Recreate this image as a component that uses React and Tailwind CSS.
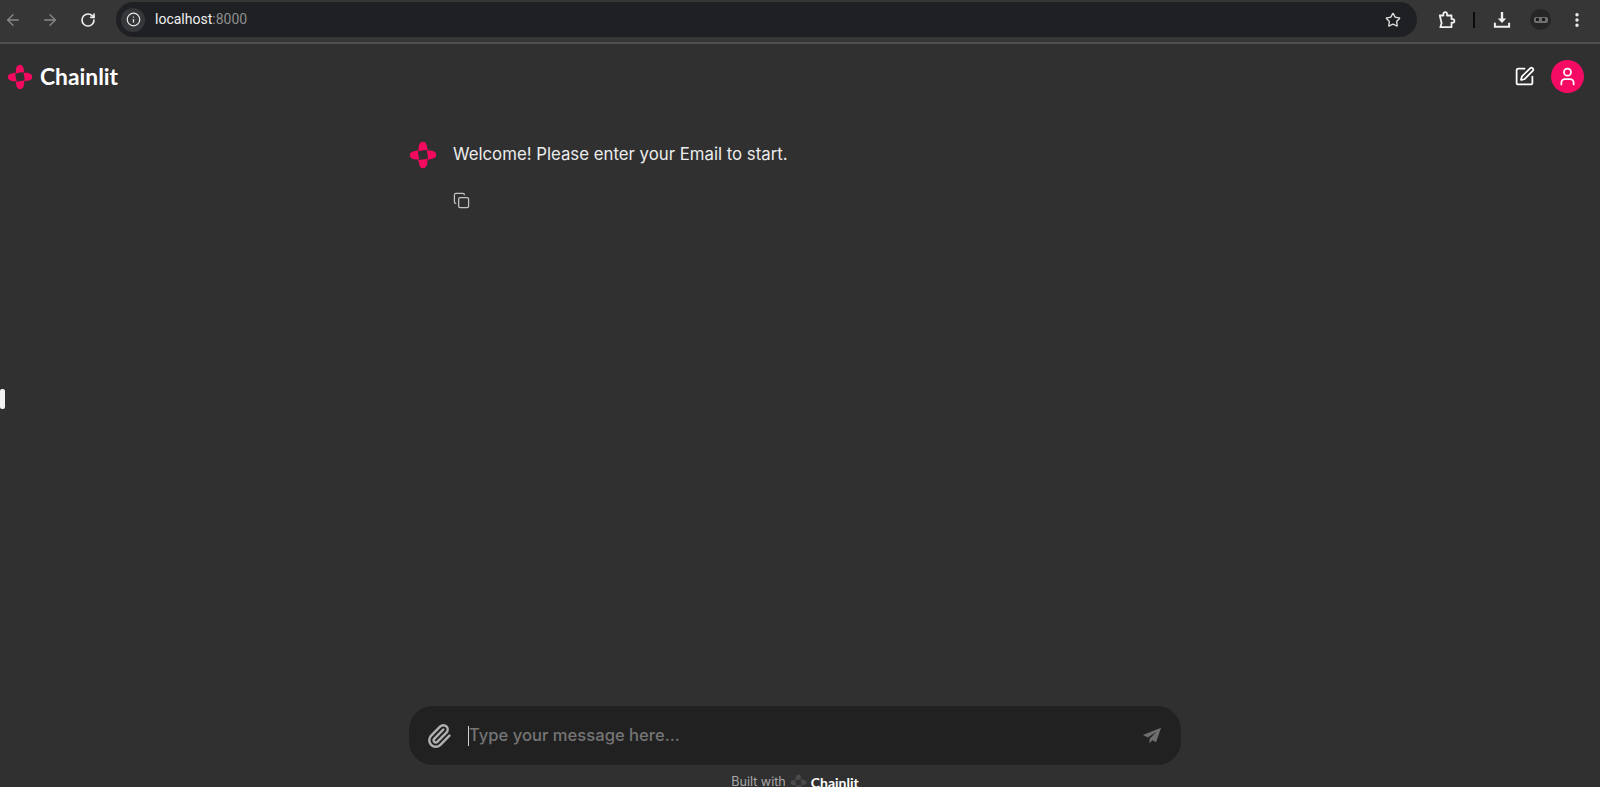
import { ArrowLeft, ArrowRight, RotateCw, Info, Star, EllipsisVertical, SquarePen, User, Copy, Paperclip } from "lucide-react";

const PETAL = "M13.6 .8C16 .6 17.6 2.6 17.8 4.8C18 6.6 18.4 7.8 19 9C16 9 12.5 9.4 9.6 10.4C9.4 8.4 9.4 6.8 9.8 5C10.2 2.8 11.4 1 13.6 .8Z";

function ChainlitMark({ className, color = "#f50a5f" }) {
  return (
    <svg viewBox="0 0 28 28" className={className} fill={color}>
      <path d={PETAL} />
      <path d={PETAL} transform="rotate(90 14 14)" />
      <path d={PETAL} transform="rotate(180 14 14)" />
      <path d={PETAL} transform="rotate(270 14 14)" />
    </svg>
  );
}

function ExtensionsIcon() {
  return (
    <svg viewBox="0 0 20 20" className="ml-[21px] h-[18px] w-[18px] shrink-0" fill="none" stroke="#f0f0f0" strokeWidth="2" strokeLinejoin="round">
      <path d="M2 5h4V3.2a2 2 0 0 1 4 0V5h5v4h1.2a2 2 0 0 1 0 4H15v5H2.6L4 13.5 2 5z" />
    </svg>
  );
}

function DownloadIcon() {
  return (
    <svg viewBox="0 0 20 20" className="ml-[18px] h-[18px] w-[18px] shrink-0" fill="#f0f0f0">
      <path d="M8.7 1h2.6v7.2h3.4L10 13.4 5.3 8.2h3.4V1z" />
      <path d="M1 13h2.2v3.4h13.6V13H19v5.6H1V13z" />
    </svg>
  );
}

function SendIcon() {
  return (
    <svg viewBox="0 0 22 20" className="h-[20px] w-[20px] shrink-0" fill="#6e6e6e">
      <path d="M21 1 1 9l5.5 2.6L16 5l-7.5 8-.5 5 3.5-3.4 4 2.2L21 1z" />
    </svg>
  );
}

function BrowserBar() {
  return (
    <div className="flex h-[42px] shrink-0 items-center bg-[#363636] pb-[3px] pl-[4px]">
      <ArrowLeft className="h-[18px] w-[18px] shrink-0 text-[#8a8a8a]" strokeWidth={1.75} />
      <ArrowRight className="ml-[19px] h-[18px] w-[18px] shrink-0 text-[#8a8a8a]" strokeWidth={1.75} />
      <RotateCw className="ml-[21px] h-[16px] w-[16px] shrink-0 text-[#f0f0f0]" strokeWidth={2.5} />
      <div className="ml-[20px] flex h-[35px] min-w-0 flex-1 items-center rounded-full bg-[#1f2023] pl-[5px] pr-[16px]">
        <div className="flex h-[24px] w-[24px] items-center justify-center rounded-full bg-[#36373a]">
          <Info className="h-[15px] w-[15px] text-[#e8e8e8]" strokeWidth={2} />
        </div>
        <span className="ml-[10px] flex-1 text-[14px] text-[#f0f0f0]" style={{ fontFamily: "Roboto, sans-serif" }}>
          localhost<span className="text-[#8f8f8f]">:8000</span>
        </span>
        <Star className="h-[16px] w-[16px] text-[#e0e0e0]" strokeWidth={2} />
      </div>
      <ExtensionsIcon />
      <div className="ml-[17px] h-[16px] w-[2px] shrink-0 bg-[#0b0b0b]" />
      <DownloadIcon />
      <div className="ml-[19px] flex h-[21px] w-[21px] shrink-0 items-center justify-center rounded-full bg-[#262626]">
        <div className="flex h-[6px] w-[14px] items-center justify-center gap-[3px] rounded-[2px] bg-[#6f6f6f]">
          <span className="h-[3px] w-[3px] bg-[#1a1a1a]" />
          <span className="h-[3px] w-[3px] bg-[#1a1a1a]" />
        </div>
      </div>
      <EllipsisVertical className="ml-[17px] mr-[14px] h-[18px] w-[18px] shrink-0 text-[#f0f0f0]" strokeWidth={2.5} />
    </div>
  );
}

export default function App() {
  return (
    <div className="relative flex h-[787px] w-full flex-col overflow-hidden bg-[#303030] text-white" style={{ fontFamily: "Inter, sans-serif" }}>
      <BrowserBar />
      <div className="h-[2px] shrink-0 bg-[#505050]" />

      <header className="flex h-[65px] shrink-0 items-center justify-between pl-[7px] pr-[16px]">
        <div className="flex items-center gap-[7px]">
          <ChainlitMark className="h-[26px] w-[26px]" />
          <span className="text-[22.8px] font-bold text-white" style={{ fontFamily: "Lato, sans-serif" }}>Chainlit</span>
        </div>
        <div className="flex items-center gap-[16px]">
          <SquarePen className="h-[21px] w-[21px] text-white" strokeWidth={2} />
          <div className="flex h-[33px] w-[33px] items-center justify-center rounded-full bg-[#f50a64]">
            <User className="h-[21px] w-[21px] text-white" strokeWidth={2} />
          </div>
        </div>
      </header>

      <main className="flex min-h-0 flex-1 flex-col items-center pr-[10px]">
        <div className="w-[772px] flex-1 pt-[32px]">
          <div className="flex gap-[16px]">
            <ChainlitMark className="h-[28px] w-[28px] shrink-0" />
            <div>
              <p className="mt-[1px] text-[16.8px] leading-[24px] text-[#ececec]">Welcome! Please enter your Email to start.</p>
              <Copy className="mt-[26px] h-[17px] w-[17px] text-[#c4c4c4]" strokeWidth={1.75} />
            </div>
          </div>
        </div>

        <div className="flex h-[59px] w-[772px] shrink-0 items-center rounded-[24px] bg-[#212121] pl-[17px] pr-[19px]">
          <Paperclip className="h-[26px] w-[26px] shrink-0 text-[#b0b0b0]" strokeWidth={2.25} />
          <div className="ml-[16px] h-[20px] w-[1px] shrink-0 bg-[#d0d0d0]" />
          <span className="flex-1 text-[16.6px] font-medium text-[#757575]">Type your message here...</span>
          <SendIcon />
        </div>

        <div className="flex h-[22px] shrink-0 items-center justify-center gap-[4px] pt-[12px] text-[12.6px]">
          <span className="text-[#a8a8a8]">Built with</span>
          <ChainlitMark className="h-[17px] w-[17px]" color="#4a4a4a" />
          <span className="text-[14px] font-bold text-white" style={{ fontFamily: "Lato, sans-serif" }}>Chainlit</span>
        </div>
      </main>

      <div className="absolute left-0 top-[389px] h-[20px] w-[5px] rounded-[2px] bg-[#f2f2f2]" />
    </div>
  );
}
